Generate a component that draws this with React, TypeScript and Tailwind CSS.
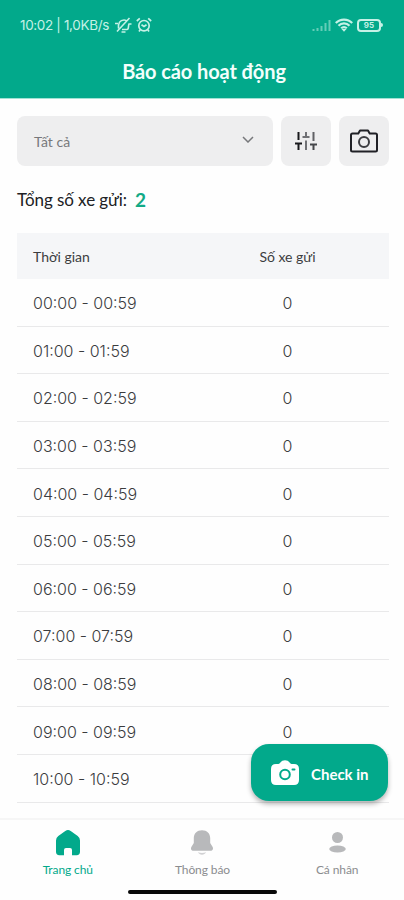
import type { ReactNode } from 'react';

const hours = Array.from({ length: 11 }, (_, i) => {
  const h = i.toString().padStart(2, '0');
  return { label: `${h}:00 - ${h}:59`, count: 0 };
});

const StatusBar = () => (
  <div className="flex h-[50px] items-center justify-between pl-5 pr-[21px] text-[#c5f1e6]">
    <div className="flex items-center">
      <span className="w-[94px] whitespace-nowrap font-['Inter'] text-[13.5px] tracking-[-0.35px]">
        10:02 | 1,0KB/s
      </span>
      <svg className="h-4 w-[18px]" viewBox="0 0 18 16" fill="none" stroke="currentColor" strokeWidth="1.6">
        <path d="M1 6.5h3M4.5 11.500C4 6 6 3 10 3c1.500 0 2.500.5 3 1.500M8 12.500h5c2 0 1-3 2-5.500h2.500M7.500 15h4M3 14.500 15.500 1" />
      </svg>
      <svg className="ml-[4px] h-4 w-4" viewBox="0 0 16 16" fill="none" stroke="currentColor" strokeWidth="1.7">
        <circle cx="8" cy="8.700" r="5.200" />
        <path d="m.8 4 3-2.700M12.200 1.300l3 2.700M5.500 7.800 8 9.500l2.500-1.700M4.200 12.800 3 14.500M11.800 12.800l1.200 1.700" />
      </svg>
    </div>
    <div className="flex items-center">
      <svg className="h-3 w-[19px] opacity-50" viewBox="0 0 19 12" stroke="currentColor" strokeWidth="2">
        <path d="M1.5 12v-2M5.5 12V9M9.5 12V7M13.5 12V4M17.5 12V1" />
      </svg>
      <svg className="ml-[4px] h-[14px] w-[18px]" viewBox="0 0 18 14" fill="none" stroke="currentColor" strokeWidth="2.2">
        <path d="M.8 5C5.2.4 12.8.4 17.2 5M3.5 7.7c3-3.1 8-3.1 11 0M6.2 10.3c1.6-1.6 4-1.6 5.6 0" />
        <path d="m6.500 11 2.500 2.800 2.500-2.800Z" fill="currentColor" stroke="none" />
      </svg>
      <div className="ml-[4px] flex h-[13px] w-6 items-center justify-center rounded-[4px] border-2 border-current font-['Inter'] text-[8px] font-bold leading-none">
        95
      </div>
      <div className="h-1 w-[2px] rounded-r bg-current" />
    </div>
  </div>
);

const SlidersIcon = () => (
  <svg className="h-5 w-[22px]" viewBox="0 0 22 20" fill="none" strokeWidth="2">
    <path d="M3.5 1v8M0 12.500h7M3.500 12.500V19" stroke="#18191c" />
    <path d="M11 1v5M7.500 6h7M11 9.500V19" stroke="#707175" />
    <path d="M18.500 1v9" stroke="#606165" />
    <path d="M15 13.500h7M18.500 13.500V19" stroke="#45464a" />
  </svg>
);

const CameraIcon = () => (
  <svg className="h-[24px] w-7" viewBox="0 0 28 24" fill="none" stroke="#202126" strokeWidth="2" strokeLinejoin="round">
    <path d="M2.500 4.500h5.800L10 1.500h8l1.700 3h5.800q1.500 0 1.500 1.500v15q0 1.500-1.500 1.500h-23Q1 22.500 1 21V6q0-1.500 1.500-1.500Z" />
    <circle cx="14" cy="13" r="5" stroke="#3b3c40" />
  </svg>
);

const HomeIcon = () => (
  <svg className="h-[26px] w-6" viewBox="0 0 24 26" fill="currentColor">
    <path d="M9.300.9Q12-.8 14.700.9l7 5.100Q24 7.700 24 10.500v11.300q0 3.400-3.400 3.400H16V20q0-2-2-2h-4q-2 0-2 2v5.200H3.400Q0 25.200 0 21.800V10.500Q0 7.700 2.300 6Z" />
  </svg>
);

const BellIcon = () => (
  <svg className="h-[26px] w-6" viewBox="0 0 24 26" fill="currentColor">
    <path d="M12 .2C7 .2 3.800 3.500 3.800 8v5L1.500 16.700C.3 18.800 1.300 20.700 3.500 20.700h17c2.200 0 3.200-1.900 2-4L20.200 13V8C20.200 3.500 17 .2 12 .2Z" />
    <path d="M8 22.300q4 1.200 8 0c-1.300 3.200-6.700 3.200-8 0Z" opacity=".65" />
  </svg>
);

const UserIcon = () => (
  <svg className="h-[26px] w-6" viewBox="0 0 24 26" fill="currentColor">
    <circle cx="12.500" cy="7.500" r="5.500" />
    <ellipse cx="12.500" cy="19" rx="8.300" ry="3.500" />
  </svg>
);

const NavItem = ({ icon, label, active = false }: { icon: ReactNode; label: string; active?: boolean }) => (
  <button
    className={`flex flex-col items-center pl-px pt-[10px] ${active ? 'text-[#02a98b]' : 'text-[#b8b9bb]'}`}
  >
    {icon}
    <span className={`mt-[6px] text-[12px] leading-4 tracking-[-0.1px] ${active ? '' : 'text-[#8b8c8f]'}`}>
      {label}
    </span>
  </button>
);

export default function App() {
  return (
    <div className="relative flex h-[900px] w-[404px] flex-col overflow-hidden bg-[#fefefe] font-['Lato','Noto_Sans',sans-serif] text-[#292a2d]">
      <header className="h-[99px] shrink-0 border-b border-[#a0e2d4] bg-[#02a98b]">
        <StatusBar />
        <h1 className="pl-1 text-center text-[20px] font-bold leading-[42px] tracking-[-0.1px] text-[#f3fffc]">
          Báo cáo hoạt động
        </h1>
      </header>

      <main className="flex-1 overflow-hidden pl-[17px] pr-[15px] pt-[17px]">
        <div className="flex gap-2">
          <button className="flex h-[50px] w-[256px] items-center justify-between rounded-lg bg-[#eeeeef] pl-[17px] pr-[19px] text-[14px] text-[#77787b]">
            Tất cả
            <svg className="mb-[3px] h-[7px] w-3" viewBox="0 0 12 7" fill="none" stroke="currentColor" strokeWidth="1.5">
              <path d="m1 1 5 5 5-5" />
            </svg>
          </button>
          <button className="flex h-[50px] w-[50px] items-center justify-center rounded-lg bg-[#eeeeef]">
            <SlidersIcon />
          </button>
          <button className="flex h-[50px] w-[50px] items-center justify-center rounded-lg bg-[#eeeeef]">
            <CameraIcon />
          </button>
        </div>

        <div className="mt-[22px] flex h-6 items-center text-[17px] tracking-[-0.08px] text-[#202124]">
          Tổng số xe gửi:
          <span className="ml-2 text-[19px] font-bold text-[#12aa86]">2</span>
        </div>

        <div className="mt-[21px]">
          <div className="grid h-[46px] grid-cols-[168px_1fr] items-center bg-[#f5f6f8] pt-px text-[14px] text-[#3c3d40]">
            <span className="pl-[16px]">Thời gian</span>
            <span className="pl-px text-center">Số xe gửi</span>
          </div>
          {hours.map((row) => (
            <div
              key={row.label}
              className="grid h-[47.6px] grid-cols-[168px_1fr] items-center border-b border-[#e9e9ea] pt-[2px] font-['Inter'] text-[16px] font-light text-[#3b3c3e]"
            >
              <span className="pl-[16px]">{row.label}</span>
              <span className="pl-px text-center">{row.count}</span>
            </div>
          ))}
        </div>
      </main>

      <button className="absolute bottom-[99px] right-[16px] flex h-[57px] w-[137px] items-center rounded-[18px] bg-[#02a98b] pl-5 text-white shadow-[0_3px_5px_rgba(0,0,0,0.3)]">
        <svg className="h-[25px] w-7" viewBox="0 0 28 25">
          <path
            d="M7.500 4Q9 3.500 9.800 2 10.800.3 14 .3T18.200 2Q19 3.500 20.500 4H23q5 0 5 5v11q0 5-5 5H5q-5 0-5-5V9q0-5 5-5Z"
            fill="#fff"
          />
          <circle cx="14" cy="14.500" r="4.800" fill="none" stroke="#02a98b" strokeWidth="2" />
          <path d="M21.500 9.500h2" stroke="#02a98b" strokeWidth="2" strokeLinecap="round" />
        </svg>
        <span className="ml-[12px] mt-[3px] whitespace-nowrap text-[15px] font-bold">Check in</span>
      </button>

      <nav className="h-[82px] shrink-0 border-t-2 border-[#f6f6f6] bg-[#fefefe]">
        <div className="grid h-[70px] grid-cols-3">
          <NavItem icon={<HomeIcon />} label="Trang chủ" active />
          <NavItem icon={<BellIcon />} label="Thông báo" />
          <NavItem icon={<UserIcon />} label="Cá nhân" />
        </div>
        <div className="mx-auto h-[4px] w-[149px] rounded-full bg-[#090909]" />
      </nav>
    </div>
  );
}
